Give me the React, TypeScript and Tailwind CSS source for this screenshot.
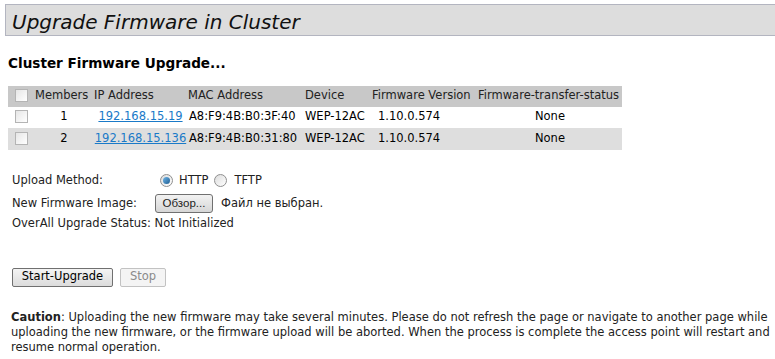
import { useState } from 'react'

const members = [
  { id: 1, ip: '192.168.15.19', mac: 'A8:F9:4B:B0:3F:40', device: 'WEP-12AC', fw: '1.10.0.574', status: 'None' },
  { id: 2, ip: '192.168.15.136', mac: 'A8:F9:4B:B0:31:80', device: 'WEP-12AC', fw: '1.10.0.574', status: 'None' },
]

function Box({ checked = false }: { checked?: boolean }) {
  return (
    <span className="inline-block w-[13px] h-[13px] border border-[#b4b4b4] bg-gradient-to-br from-[#e6e6e6] to-white align-middle">
      {checked && <span className="block w-full h-full bg-[#333]" />}
    </span>
  )
}

function Radio({ on = false }: { on?: boolean }) {
  return (
    <span className="inline-flex items-center justify-center w-[13px] h-[13px] rounded-full border border-[#8f8f8f] bg-gradient-to-br from-[#dcdcdc] to-white align-middle">
      {on && <span className="w-[7px] h-[7px] rounded-full bg-gradient-to-br from-[#6fb6e8] to-[#1d5e93]" />}
    </span>
  )
}

export default function App() {
  const [method, setMethod] = useState('http')

  return (
    <div className="w-[775px] h-[359px] bg-white text-[11.5px] text-black overflow-hidden [font-family:'DejaVu_Sans',Verdana,sans-serif]">
      <div className="pt-[4px] pl-[5px]">
        <div className="h-[32px] border-y border-l border-[#b3b5c0] bg-[#dddddd] pl-[6px] pt-[3px] flex items-center">
          <h1 className="italic text-[20px] leading-none text-[#111]">Upgrade Firmware in Cluster</h1>
        </div>
      </div>

      <h2 className="mt-[21px] ml-[8px] font-bold text-[13.6px] leading-none">Cluster Firmware Upgrade...</h2>

      <table className="mt-[15px] ml-[8px] w-[614px] border-collapse">
        <thead>
          <tr className="h-[21px] bg-[#c8c8c8] text-[#222]">
            <th className="w-[27px] pl-[7px] text-left font-normal"><Box /></th>
            <th className="w-[58px] font-normal text-left">Members</th>
            <th className="w-[95px] font-normal text-left pl-[1px]">IP Address</th>
            <th className="w-[117px] font-normal text-left">MAC Address</th>
            <th className="w-[67px] font-normal text-left">Device</th>
            <th className="w-[106px] font-normal text-left">Firmware Version</th>
            <th className="font-normal text-left">Firmware-transfer-status</th>
          </tr>
        </thead>
        <tbody>
          {members.map((m, i) => (
            <tr key={m.id} className={i % 2 === 1 ? 'h-[22px] bg-[#dedede]' : 'h-[21px] bg-white'}>
              <td className="pl-[7px]"><Box /></td>
              <td className="text-center">{m.id}</td>
              <td className="text-center">
                <a href="#" className="text-[#1a7ac8] underline">{m.ip}</a>
              </td>
              <td className="pl-[1px]">{m.mac}</td>
              <td>{m.device}</td>
              <td className="pl-[6px]">{m.fw}</td>
              <td className="text-center">{m.status}</td>
            </tr>
          ))}
        </tbody>
      </table>

      <div className="ml-[12px] mt-[22px] text-[#222]">
        <div className="flex items-center h-[18px]">
          <span className="w-[148px]">Upload Method:</span>
          <label className="flex items-center gap-[6px] cursor-pointer" onClick={() => setMethod('http')}>
            <Radio on={method === 'http'} />
            <span>HTTP</span>
          </label>
          <label className="flex items-center gap-[7px] ml-[6px] cursor-pointer" onClick={() => setMethod('tftp')}>
            <Radio on={method === 'tftp'} />
            <span>TFTP</span>
          </label>
        </div>
        <div className="flex items-center h-[20px] mt-[4px]">
          <span className="w-[143px]">New Firmware Image:</span>
          <button className="h-[19px] w-[58px] border border-[#707070] rounded-[3px] bg-gradient-to-b from-[#f2f2f2] to-[#d6d6d6] text-[11.5px] leading-none [font-family:'Liberation_Sans',Arial,sans-serif]">
            Обзор...
          </button>
          <span className="ml-[8px]">Файл не выбран.</span>
        </div>
        <div className="mt-[1px] h-[18px] flex items-center">OverAll Upgrade Status: Not Initialized</div>
      </div>

      <div className="ml-[12px] mt-[35px] flex gap-[7px]">
        <button className="h-[19px] w-[101px] border border-[#707070] rounded-[2px] bg-gradient-to-b from-[#f4f4f4] to-[#dcdcdc] leading-none">
          Start-Upgrade
        </button>
        <button disabled className="h-[19px] w-[46px] border border-[#c2c2c2] rounded-[2px] bg-[#f4f4f4] text-[#8a8a8a] leading-none">
          Stop
        </button>
      </div>

      <p className="ml-[11px] mr-[2px] mt-[23px] leading-[15px] text-[#222]">
        <b>Caution</b>: Uploading the new firmware may take several minutes. Please do not refresh the page or navigate to another page while uploading the new firmware, or the firmware upload will be aborted. When the process is complete the access point will restart and resume normal operation.
      </p>
    </div>
  )
}
